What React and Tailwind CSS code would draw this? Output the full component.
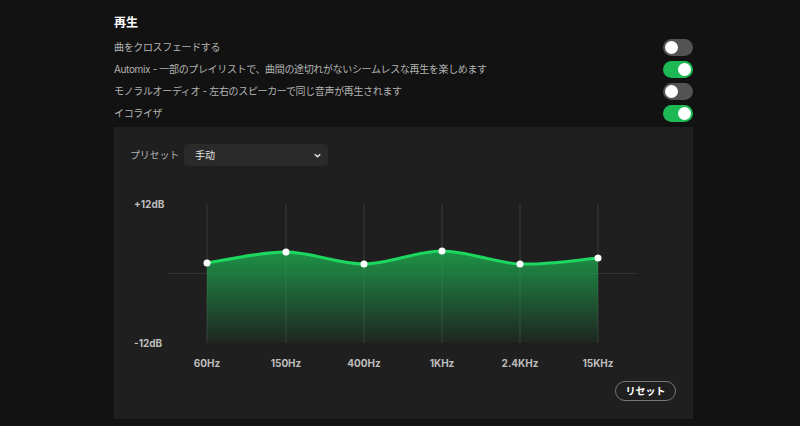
import React from "react";

const rows = [
  { label: "曲をクロスフェードする", on: false },
  { label: "Automix - 一部のプレイリストで、曲間の途切れがないシームレスな再生を楽しめます", on: true },
  { label: "モノラルオーディオ - 左右のスピーカーで同じ音声が再生されます", on: false },
  { label: "イコライザ", on: true },
];

function Toggle({ on }) {
  return (
    <div
      className={
        "w-[30px] h-[17px] rounded-full flex items-center px-[2px] " +
        (on ? "bg-[#1db954] justify-end" : "bg-[#535353] justify-start")
      }
    >
      <div className="w-[13px] h-[13px] rounded-full bg-white" />
    </div>
  );
}

const xs = [93, 172, 250, 328, 406, 484];
const ys = [97, 86, 98, 85, 98, 92];
const freqs = ["60Hz", "150Hz", "400Hz", "1KHz", "2.4KHz", "15KHz"];

function curvePath() {
  const pts = xs.map((x, i) => [x, ys[i]]);
  let d = `M ${pts[0][0]} ${pts[0][1]}`;
  for (let i = 0; i < pts.length - 1; i++) {
    const p0 = pts[i - 1] || pts[i];
    const p1 = pts[i];
    const p2 = pts[i + 1];
    const p3 = pts[i + 2] || p2;
    const t = 6;
    const c1 = [p1[0] + (p2[0] - p0[0]) / t, p1[1] + (p2[1] - p0[1]) / t];
    const c2 = [p2[0] - (p3[0] - p1[0]) / t, p2[1] - (p3[1] - p1[1]) / t];
    d += ` C ${c1[0]} ${c1[1]} ${c2[0]} ${c2[1]} ${p2[0]} ${p2[1]}`;
  }
  return d;
}

function Chart() {
  const line = curvePath();
  const fill = `${line} L 484 177 L 93 177 Z`;
  return (
    <svg width="579" height="210" viewBox="0 0 579 210" className="block">
      <defs>
        <linearGradient id="eqfill" x1="0" y1="85" x2="0" y2="177" gradientUnits="userSpaceOnUse">
          <stop offset="0" stopColor="#1db954" stopOpacity="0.75" />
          <stop offset="1" stopColor="#1db954" stopOpacity="0.04" />
        </linearGradient>
      </defs>
      {xs.map((x) => (
        <line key={x} x1={x} y1="38" x2={x} y2="177" stroke="#3a3a3a" strokeWidth="1" />
      ))}
      <line x1="54" y1="107.5" x2="523" y2="107.5" stroke="#333333" strokeWidth="1" />
      <path d={fill} fill="url(#eqfill)" />
      <path d={line} fill="none" stroke="#1ed760" strokeWidth="3" strokeLinecap="round" />
      {xs.map((x, i) => (
        <circle key={x} cx={x} cy={ys[i]} r="3.5" fill="#ffffff" />
      ))}
      <text x="20" y="42" fill="#bdbdbd" fontSize="10" fontWeight="700" fontFamily="Inter, sans-serif">+12dB</text>
      <text x="20" y="181" fill="#bdbdbd" fontSize="10" fontWeight="700" fontFamily="Inter, sans-serif">-12dB</text>
      {xs.map((x, i) => (
        <text key={x} x={x} y="201" textAnchor="middle" fill="#bdbdbd" fontSize="10" fontWeight="700" fontFamily="Inter, sans-serif">
          {freqs[i]}
        </text>
      ))}
    </svg>
  );
}

export default function App() {
  return (
    <div className="w-[800px] h-[426px] bg-[#121212] overflow-hidden font-['Inter','Noto_Sans_CJK_JP',sans-serif]">
      <div className="ml-[114px] w-[579px] flex flex-col">
        <div className="pt-[15px] h-[30px] text-[12px] leading-[15px] font-bold text-white">再生</div>
        <div className="mt-[6px] flex flex-col">
          {rows.map((r) => (
            <div key={r.label} className="h-[22px] flex items-center justify-between">
              <span className="text-[10px] tracking-[-0.35px] text-[#b3b3b3]">{r.label}</span>
              <Toggle on={r.on} />
            </div>
          ))}
        </div>
        <div className="mt-[3px] h-[292px] bg-[#1f1f1f] flex flex-col">
          <div className="pt-[17px] pl-[16px] flex items-center gap-[5px]">
            <span className="text-[10px] tracking-[-0.2px] text-[#b3b3b3]">プリセット</span>
            <div className="w-[144px] h-[22px] rounded-[4px] bg-[#2a2a2a] flex items-center justify-between pl-[11px] pr-[6px]">
              <span className="text-[10px] text-[#e6e6e6]">手动</span>
              <svg width="9" height="9" viewBox="0 0 10 10">
                <path d="M2 3.5 L5 6.5 L8 3.5" fill="none" stroke="#e6e6e6" strokeWidth="1.6" />
              </svg>
            </div>
          </div>
          <Chart />
          <div className="mt-[5px] flex justify-end pr-[17px]">
            <div className="h-[20px] w-[61px] rounded-full border border-[#777777] flex items-center justify-center text-[10px] font-bold text-white">
              リセット
            </div>
          </div>
        </div>
      </div>
    </div>
  );
}
